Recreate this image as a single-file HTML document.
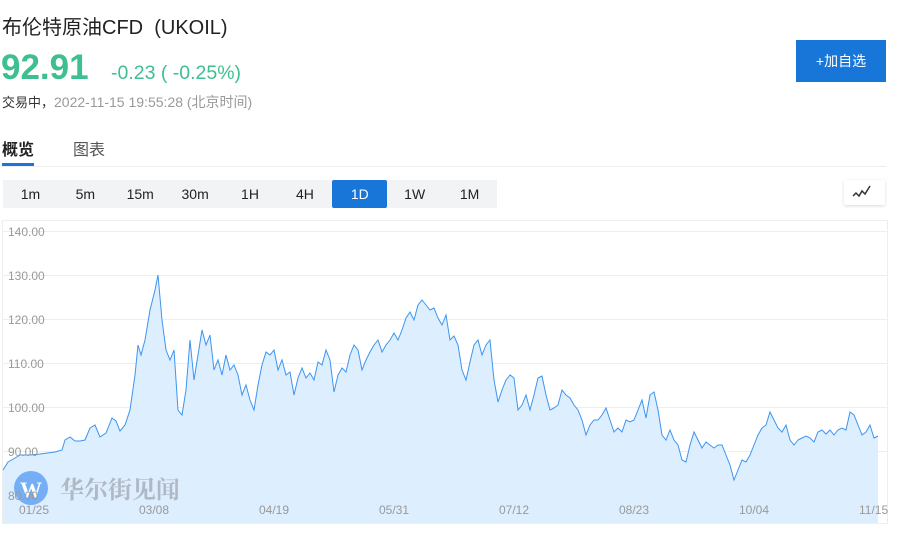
<!DOCTYPE html>
<html><head><meta charset="utf-8"><style>
body{margin:0;width:900px;height:537px;background:#fff;font-family:"Liberation Sans","Noto Sans CJK SC",sans-serif;position:relative;overflow:hidden}
.a{position:absolute;white-space:nowrap}
.tf{position:absolute;top:180px;left:3px;width:494px;height:28px;background:#f2f3f5;display:flex}
.tf div{width:55px;text-align:center;line-height:28px;font-size:14px;color:#222}
.tf .on{background:#1976d9;color:#fff;border-radius:2px}
</style></head><body>
<div class="a" style="left:2px;top:11px;font-size:20px;color:#222">布伦特原油CFD&nbsp;&nbsp;(UKOIL)</div>
<div class="a" style="left:1px;top:48px;font-size:35px;font-weight:bold;color:#3dbf8f">92.91</div>
<div class="a" style="left:111px;top:62px;font-size:19.5px;color:#3dbf8f">-0.23 ( -0.25%)</div>
<div class="a" style="left:2px;top:92px;font-size:13px;color:#333">交易中，<span style="color:#999;font-size:14px">2022-11-15 19:55:28 (北京时间)</span></div>
<div class="a" style="left:796px;top:40px;width:90px;height:42px;background:#1976d9;color:#fff;font-size:14px;line-height:42px;text-align:center">+加自选</div>
<div class="a" style="left:2px;top:136px;font-size:16px;font-weight:bold;color:#222">概览</div>
<div class="a" style="left:73px;top:136px;font-size:16px;color:#555">图表</div>
<div class="a" style="left:2px;top:163px;width:32px;height:3px;background:#1976d9"></div>
<div class="a" style="left:0;top:166px;width:886px;height:1px;background:#eee"></div>
<div class="tf"><div>1m</div><div>5m</div><div>15m</div><div>30m</div><div>1H</div><div>4H</div><div class="on">1D</div><div>1W</div><div>1M</div></div>
<div class="a" style="left:844px;top:180px;width:41px;height:25px;background:#fff;box-shadow:0 1px 3px rgba(0,0,0,.15);border-radius:2px">
<svg width="41" height="25"><polyline points="9,16 12,13 15,16 18,11 21,14 26,6" fill="none" stroke="#333" stroke-width="1.5"/></svg></div>
<svg class="a" style="left:0;top:0" width="900" height="537">
<rect x="2.5" y="220.5" width="885" height="303" fill="none" stroke="#eee"/>
<g stroke="#eee"><line x1="3" x2="887" y1="231.5" y2="231.5"/><line x1="3" x2="887" y1="275.5" y2="275.5"/><line x1="3" x2="887" y1="319.5" y2="319.5"/><line x1="3" x2="887" y1="363.5" y2="363.5"/><line x1="3" x2="887" y1="407.5" y2="407.5"/><line x1="3" x2="887" y1="451.5" y2="451.5"/></g>
<polygon fill="#ddeeff" points="3,523 3,470 8,462 15,458 20,455 30,455 40,454 55,452 62,450 65,440 70,437 75,441 80,441 85,440 90,428 95,425 100,437 106,433 112,418 116,421 120,431 125,425 130,410 135,375 138,345 141,355 145,340 150,310 155,290 158,275 162,320 166,350 170,360 174,350 178,410 182,415 186,390 190,340 194,380 198,355 202,330 206,345 210,335 214,370 218,360 222,375 226,355 230,370 234,365 238,375 242,395 246,385 250,400 254,410 258,385 262,365 266,352 270,355 274,350 278,370 282,360 286,375 290,372 294,395 298,378 302,368 306,378 310,373 314,380 318,362 322,365 326,350 330,360 334,392 338,375 342,368 346,372 350,355 354,345 358,350 362,370 366,360 370,352 374,345 378,340 382,352 386,345 390,340 394,333 398,340 402,330 406,318 410,312 414,320 418,305 422,300 426,305 430,310 434,308 438,318 442,325 446,315 450,340 454,336 458,345 462,370 466,380 470,362 474,345 478,340 482,355 486,345 490,340 494,380 498,402 502,390 506,380 510,375 514,378 518,410 522,405 526,395 530,410 534,395 538,378 542,376 546,395 550,410 554,408 558,405 562,390 566,395 570,398 574,405 578,410 582,420 586,435 590,425 594,420 598,420 602,415 606,408 610,420 614,432 618,428 622,432 626,420 630,422 634,420 638,410 642,400 646,418 650,395 654,392 658,410 662,435 666,440 670,430 674,440 678,445 682,460 686,462 690,445 694,432 698,440 702,448 706,442 710,445 714,448 718,445 722,445 726,455 730,465 734,480 738,470 742,460 746,462 750,455 754,445 758,435 762,428 766,425 770,412 774,420 778,428 782,432 786,425 790,440 794,445 798,440 802,438 806,436 810,438 814,442 818,432 822,430 826,434 830,430 834,435 838,430 842,428 846,430 850,412 854,415 858,425 862,435 866,432 870,425 874,438 878,436 878,523"/>
<polyline fill="none" stroke="#3d95f0" stroke-width="1" points="3,470 8,462 15,458 20,455 30,455 40,454 55,452 62,450 65,440 70,437 75,441 80,441 85,440 90,428 95,425 100,437 106,433 112,418 116,421 120,431 125,425 130,410 135,375 138,345 141,355 145,340 150,310 155,290 158,275 162,320 166,350 170,360 174,350 178,410 182,415 186,390 190,340 194,380 198,355 202,330 206,345 210,335 214,370 218,360 222,375 226,355 230,370 234,365 238,375 242,395 246,385 250,400 254,410 258,385 262,365 266,352 270,355 274,350 278,370 282,360 286,375 290,372 294,395 298,378 302,368 306,378 310,373 314,380 318,362 322,365 326,350 330,360 334,392 338,375 342,368 346,372 350,355 354,345 358,350 362,370 366,360 370,352 374,345 378,340 382,352 386,345 390,340 394,333 398,340 402,330 406,318 410,312 414,320 418,305 422,300 426,305 430,310 434,308 438,318 442,325 446,315 450,340 454,336 458,345 462,370 466,380 470,362 474,345 478,340 482,355 486,345 490,340 494,380 498,402 502,390 506,380 510,375 514,378 518,410 522,405 526,395 530,410 534,395 538,378 542,376 546,395 550,410 554,408 558,405 562,390 566,395 570,398 574,405 578,410 582,420 586,435 590,425 594,420 598,420 602,415 606,408 610,420 614,432 618,428 622,432 626,420 630,422 634,420 638,410 642,400 646,418 650,395 654,392 658,410 662,435 666,440 670,430 674,440 678,445 682,460 686,462 690,445 694,432 698,440 702,448 706,442 710,445 714,448 718,445 722,445 726,455 730,465 734,480 738,470 742,460 746,462 750,455 754,445 758,435 762,428 766,425 770,412 774,420 778,428 782,432 786,425 790,440 794,445 798,440 802,438 806,436 810,438 814,442 818,432 822,430 826,434 830,430 834,435 838,430 842,428 846,430 850,412 854,415 858,425 862,435 866,432 870,425 874,438 878,436"/>
<circle cx="31" cy="488" r="17" fill="#5a9ef5" opacity=".8"/>
<text x="20" y="497" font-size="22" font-weight="bold" fill="#fff" font-family="Liberation Serif,serif">W</text>
<text x="60" y="498" font-size="24" font-weight="bold" fill="#b0b8c4" font-family="Noto Serif CJK SC,serif">华尔街见闻</text>
<g font-size="12" fill="#999" font-family="Liberation Sans,sans-serif">
<text x="8" y="236">140.00</text><text x="8" y="280">130.00</text><text x="8" y="324">120.00</text><text x="8" y="368">110.00</text><text x="8" y="412">100.00</text><text x="8" y="456">90.00</text><text x="8" y="500">80.00</text>
<text x="19" y="514">01/25</text><text x="139" y="514">03/08</text><text x="259" y="514">04/19</text><text x="379" y="514">05/31</text><text x="499" y="514">07/12</text><text x="619" y="514">08/23</text><text x="739" y="514">10/04</text><text x="859" y="514">11/15</text></g>
</svg>
</body></html>
